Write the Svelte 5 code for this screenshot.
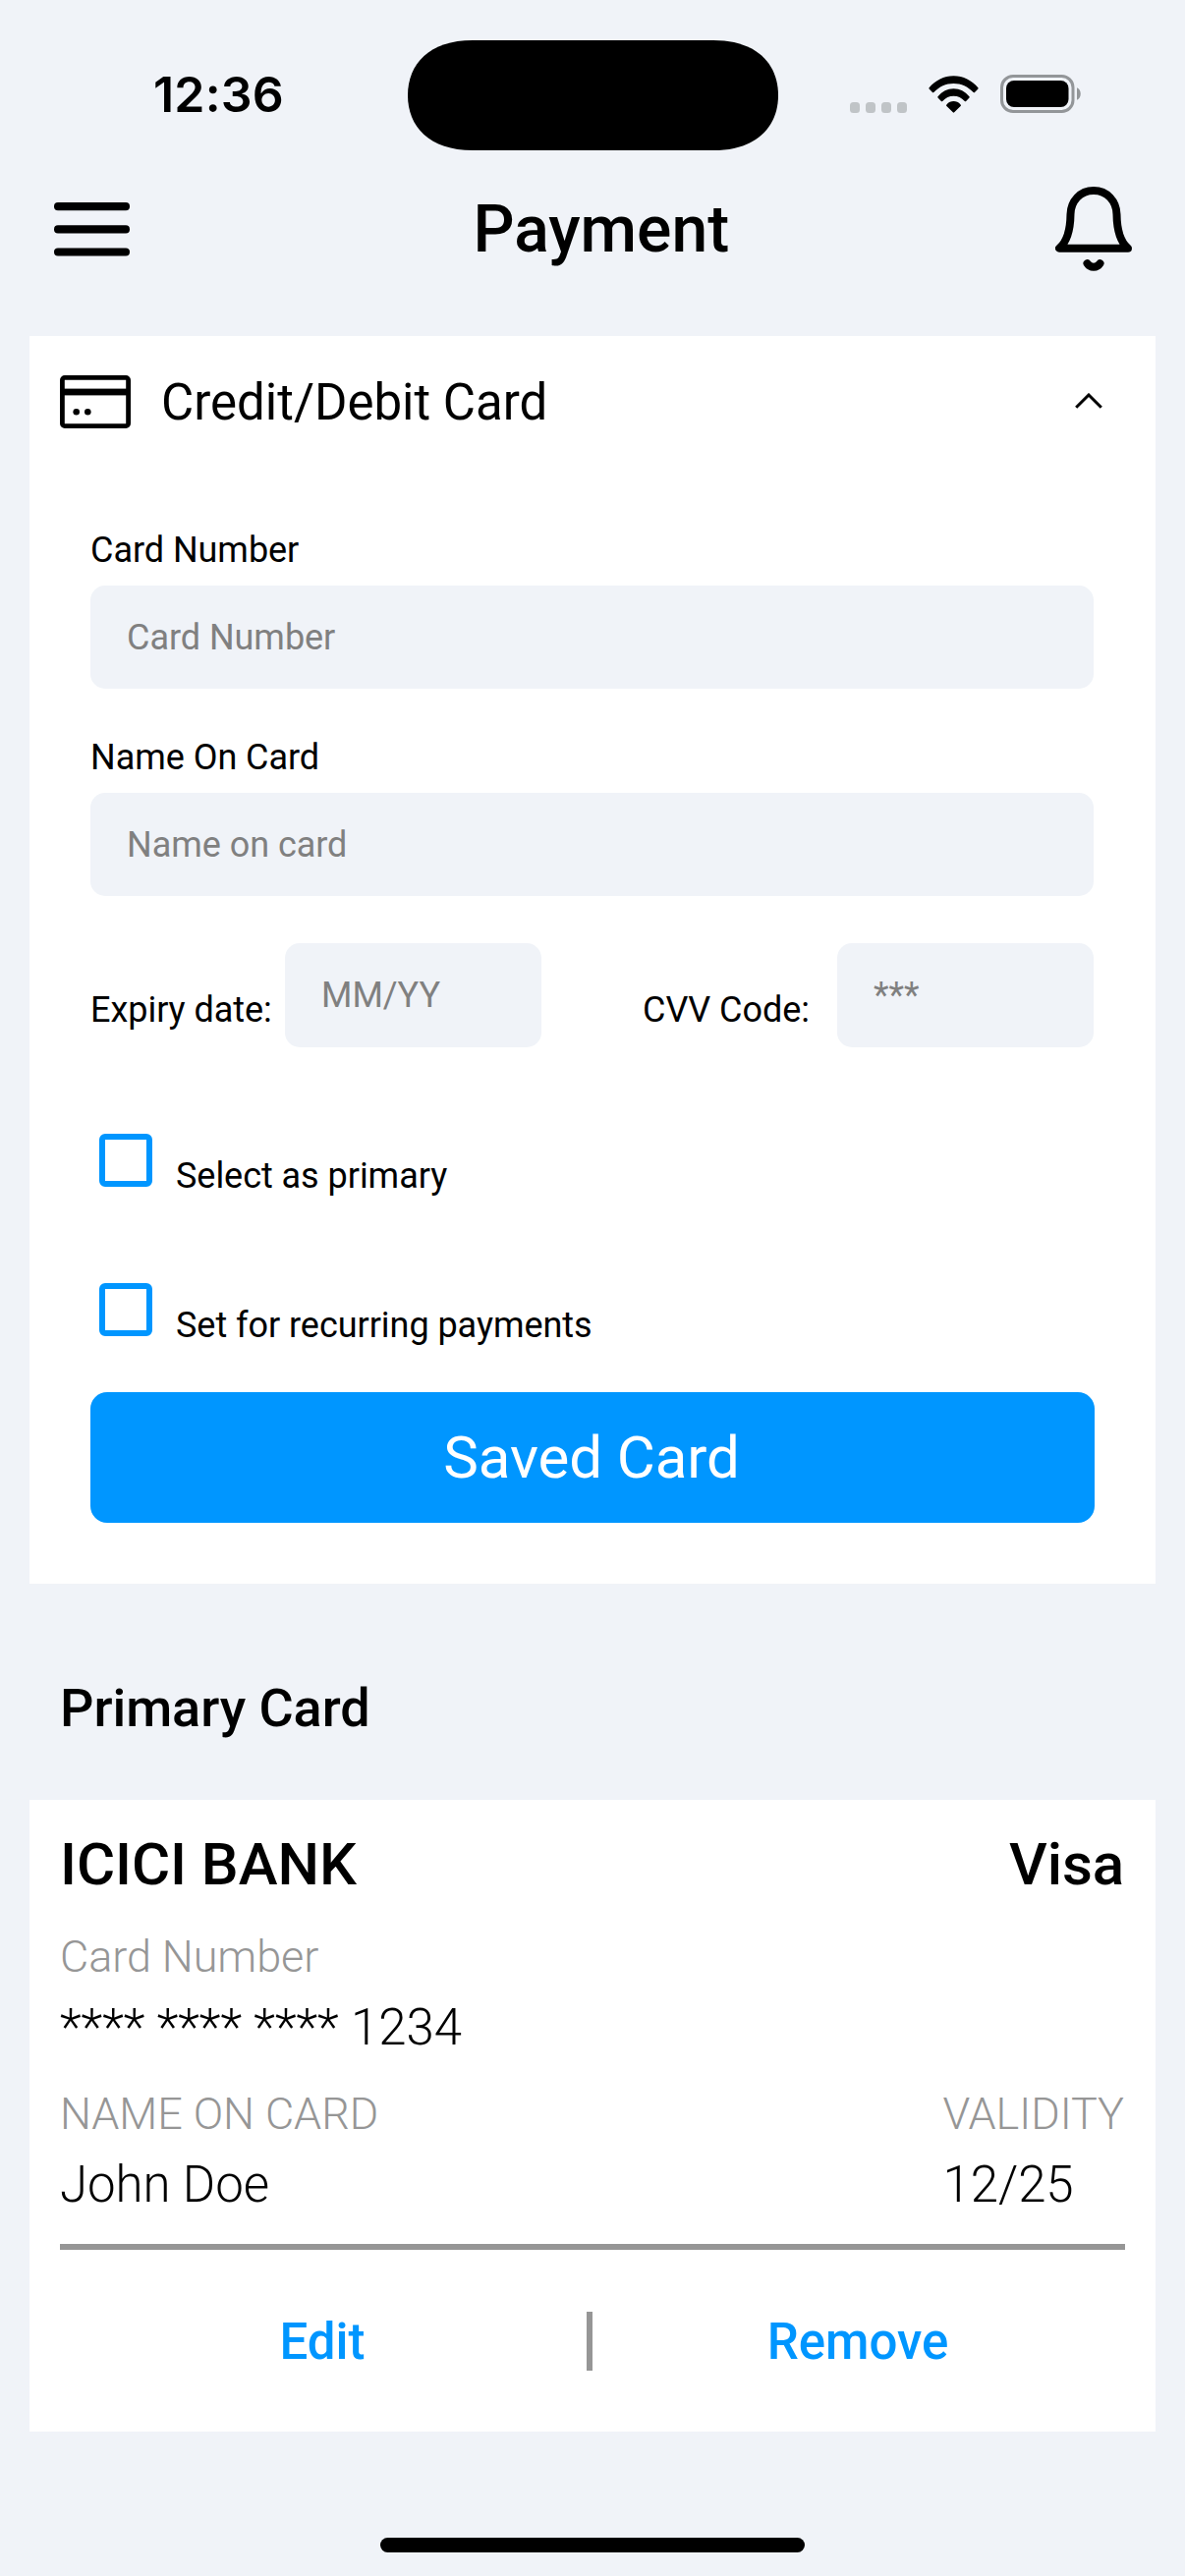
<script>
  const options = ['Select as primary', 'Set for recurring payments'];
  const signalDots = [0, 1, 2, 3];
</script>

<div class="screen">
  <div class="status">
    <div class="time">12:36</div>
    <svg class="island" viewBox="0 0 377 112">
      <path d="M66 0H311C355 0 377 24 377 56S355 112 311 112H66C22 112 0 88 0 56S22 0 66 0Z" />
    </svg>
    <div class="indicators">
      <div class="signal">
        {#each signalDots as dot (dot)}<i></i>{/each}
      </div>
      <svg class="wifi" viewBox="0 0 51 38">
        <path d="M.6 12.2C7 5 15.600 .3 25.500 .3S44 5 50.400 12.200a1 1 0 0 1 0 1.200L47 16.900a1 1 0 0 1-1.300 0C40 11.300 33.500 8 25.500 8S11 11.300 5.300 16.900a1 1 0 0 1-1.300 0L.6 13.400a1 1 0 0 1 0-1.200Z" />
        <path d="M9.500 21.200C14 16.200 19 13.300 25.500 13.300S37 16.200 41.500 21.200a1 1 0 0 1 0 1.200L38.100 25.900a1 1 0 0 1-1.300 0C33.500 22.700 30 20.800 25.500 20.800S17.500 22.700 14.200 25.900a1 1 0 0 1-1.300 0L9.500 22.400a1 1 0 0 1 0-1.200Z" />
        <path d="M18.400 29.400C22.400 25 28.600 25 32.600 29.400a1 1 0 0 1 0 1.500L26.200 37.300a1 1 0 0 1-1.400 0L18.400 30.900a1 1 0 0 1 0-1.500Z" />
      </svg>
      <svg class="battery" viewBox="0 0 83 39">
        <rect x="1.500" y="1.500" width="72.500" height="36" rx="11.500" fill="none" stroke="#939699" stroke-width="3" />
        <rect x="6" y="6" width="63.500" height="27" rx="8" />
        <path d="M78 13.200C83 15 83 24 78 25.800Z" fill="#939699" />
      </svg>
    </div>
  </div>

  <header>
    <svg class="menu" viewBox="0 0 77 55">
      <rect width="77" height="8.200" y="0" rx="4" />
      <rect width="77" height="8.200" y="23.200" rx="4" />
      <rect width="77" height="8.200" y="46.400" rx="4" />
    </svg>
    <h1>Payment</h1>
    <svg class="bell" viewBox="0 0 78 86" fill="none" stroke="#000" stroke-width="8" stroke-linecap="round" stroke-linejoin="round">
      <path d="M39 4C25 4 15.800 15 15.500 28C15.300 44 12 56 4 62.700H74C66 56 62.700 44 62.500 28C62.200 15 53 4 39 4Z" />
      <path d="M32.500 78.200C35.500 83 42.500 83 45.500 78.200" />
    </svg>
  </header>

  <section class="panel">
    <div class="panel-head">
      <svg class="card-icon" viewBox="0 0 72 54">
        <rect x="2.400" y="2.400" width="67.200" height="49.200" rx="2.500" fill="none" stroke="#000" stroke-width="4.800" />
        <rect x="3" y="13.600" width="66" height="6.800" />
        <circle cx="16.700" cy="37.300" r="3.300" />
        <circle cx="28.300" cy="37.300" r="3.300" />
      </svg>
      <h2>Credit/Debit Card</h2>
      <svg class="chevron" viewBox="0 0 28 16" fill="none" stroke="#000" stroke-width="3">
        <path d="M1.200 14.800L14 2L26.800 14.800" />
      </svg>
    </div>

    <div class="form">
      <div class="field">
        <label for="number">Card Number</label>
        <input id="number" placeholder="Card Number" />
      </div>
      <div class="field">
        <label for="name">Name On Card</label>
        <input id="name" placeholder="Name on card" />
      </div>
      <div class="pair">
        <div class="inline">
          <label for="expiry">Expiry date:</label>
          <input id="expiry" placeholder="MM/YY" />
        </div>
        <div class="inline">
          <label for="cvv">CVV Code:</label>
          <input id="cvv" placeholder="***" />
        </div>
      </div>
      <div class="options">
        {#each options as option (option)}
          <div class="option">
            <span class="box"></span>
            <span class="text">{option}</span>
          </div>
        {/each}
      </div>
      <button class="save">Saved Card</button>
    </div>
  </section>

  <h3>Primary Card</h3>

  <section class="panel saved">
    <div class="bank">
      <span>ICICI BANK</span>
      <span>Visa</span>
    </div>
    <div class="detail">
      <div class="caption">Card Number</div>
      <div class="value">**** **** **** 1234</div>
    </div>
    <div class="details">
      <div class="detail">
        <div class="caption">NAME ON CARD</div>
        <div class="value">John Doe</div>
      </div>
      <div class="detail">
        <div class="caption">VALIDITY</div>
        <div class="value">12/25</div>
      </div>
    </div>
    <div class="actions">
      <button>Edit</button>
      <i class="divider"></i>
      <button>Remove</button>
    </div>
  </section>

  <div class="home"></div>
</div>

<style>
  :global(body) {
    margin: 0;
    background: #f0f3f8;
  }
  .screen {
    box-sizing: border-box;
    width: 1206px;
    height: 2622px;
    padding-bottom: 24px;
    display: flex;
    flex-direction: column;
    background: #f0f3f8;
    color: #000;
    font-family: Roboto, sans-serif;
    overflow: hidden;
  }
  svg {
    display: block;
    flex: none;
  }
  h1, h2, h3 {
    margin: 0;
  }
  button {
    border: 0;
    padding: 0;
    font-family: inherit;
  }

  .status {
    height: 112px;
    padding: 41px 0 17px;
    display: grid;
    grid-template-columns: 414.5px 377px 1fr;
    align-items: center;
  }
  .time {
    padding: 0 0 2px 156px;
    font: 600 50px/60px Inter, sans-serif;
    letter-spacing: 0.2px;
  }
  .island {
    width: 377px;
    height: 112px;
  }
  .indicators {
    display: flex;
    align-items: center;
    padding: 0 0 3px 73.500px;
  }
  .signal {
    display: flex;
    gap: 6px;
    padding-top: 27px;
    margin-right: 22px;
  }
  .signal i {
    width: 10px;
    height: 11px;
    border-radius: 3.500px;
    background: #c0c4c7;
  }
  .wifi {
    width: 51px;
    height: 38px;
    margin-right: 22px;
  }
  .battery {
    width: 83px;
    height: 39px;
  }

  header {
    height: 126px;
    padding: 0 54.500px 0 55px;
    margin-bottom: 46px;
    display: flex;
    align-items: center;
    justify-content: space-between;
  }
  .menu {
    width: 77px;
    height: 55px;
  }
  .bell {
    width: 78px;
    height: 86px;
  }
  h1 {
    flex: 1;
    padding: 2px 0 0 18px;
    text-align: center;
    font-size: 66px;
    font-weight: 500;
    line-height: 80px;
  }

  .panel {
    margin: 0 30px;
    background: #fff;
  }
  .panel-head {
    height: 136px;
    padding: 0 54px 0 31px;
    display: flex;
    align-items: center;
  }
  .card-icon {
    width: 72px;
    height: 54px;
    margin: 0 31px 2px 0;
  }
  h2 {
    flex: 1;
    font-size: 51px;
    font-weight: 400;
    line-height: 60px;
  }
  .chevron {
    width: 28px;
    height: 16px;
    margin-bottom: 5px;
  }

  .form {
    padding: 61px 62px 62px;
    font-size: 36px;
    line-height: 42px;
    letter-spacing: -0.04px;
  }
  .field {
    display: flex;
    flex-direction: column;
    gap: 15px;
    margin: 0 1px 49px 0;
  }
  .field + .pair {
    margin-top: -1px;
  }
  input {
    box-sizing: border-box;
    width: 100%;
    height: 105px;
    border: 0;
    border-radius: 15px;
    padding: 0 37px;
    background: #f0f3f8;
    font: 400 36px/42px Roboto, sans-serif;
    letter-spacing: inherit;
    color: #000;
  }
  input::placeholder {
    color: #808080;
    opacity: 1;
  }
  .pair {
    display: flex;
    justify-content: space-between;
    margin-right: 1px;
  }
  .inline {
    display: flex;
    justify-content: space-between;
    width: 459px;
  }
  .inline label {
    padding-top: 47px;
  }
  .inline input {
    width: 261px;
    height: 106px;
  }
  .options {
    display: flex;
    flex-direction: column;
    gap: 98px;
    margin: 88px 0 57px 9px;
  }
  .option {
    height: 54px;
    display: flex;
    gap: 24px;
  }
  .box {
    box-sizing: border-box;
    width: 54px;
    height: 54px;
    border: 6px solid #0096ff;
    border-radius: 6px;
  }
  .text {
    padding-top: 22px;
  }
  .save {
    display: block;
    width: 1022px;
    height: 133px;
    padding-right: 2px;
    border-radius: 17px;
    background: #0096ff;
    color: #fff;
    font-size: 60px;
    line-height: 70px;
    letter-spacing: -0.08px;
  }

  h3 {
    height: 66px;
    padding: 94px 61px 60px;
    font-size: 54px;
    font-weight: 500;
    line-height: 66px;
    letter-spacing: -0.06px;
  }

  .saved {
    height: 612px;
    padding: 31px 31px 0;
    letter-spacing: -0.06px;
  }
  .bank {
    display: flex;
    justify-content: space-between;
    height: 70px;
    padding-right: 1px;
    font-size: 60px;
    font-weight: 500;
    line-height: 70px;
    margin-bottom: 33px;
  }
  .detail {
    display: flex;
    flex-direction: column;
    gap: 16px;
    font-weight: 300;
  }
  .caption {
    color: #969696;
    font-size: 45px;
    line-height: 52px;
  }
  .value {
    font-size: 51px;
    line-height: 60px;
  }
  .details {
    display: flex;
    justify-content: space-between;
    margin-top: 32px;
    padding: 0 1px 30px 0;
    border-bottom: 6px solid #969696;
  }
  .actions {
    display: grid;
    grid-template-columns: 536px 6px 542px;
    align-items: center;
    height: 185px;
  }
  .actions button {
    padding: 2px 2px 0 0;
    background: none;
    color: #0096ff;
    font-size: 51px;
    font-weight: 500;
    line-height: 60px;
  }
  .divider {
    height: 60px;
    background: #969696;
  }

  .home {
    width: 432px;
    height: 15px;
    margin: auto auto 0;
    border-radius: 8px;
    background: #000;
  }
</style>
